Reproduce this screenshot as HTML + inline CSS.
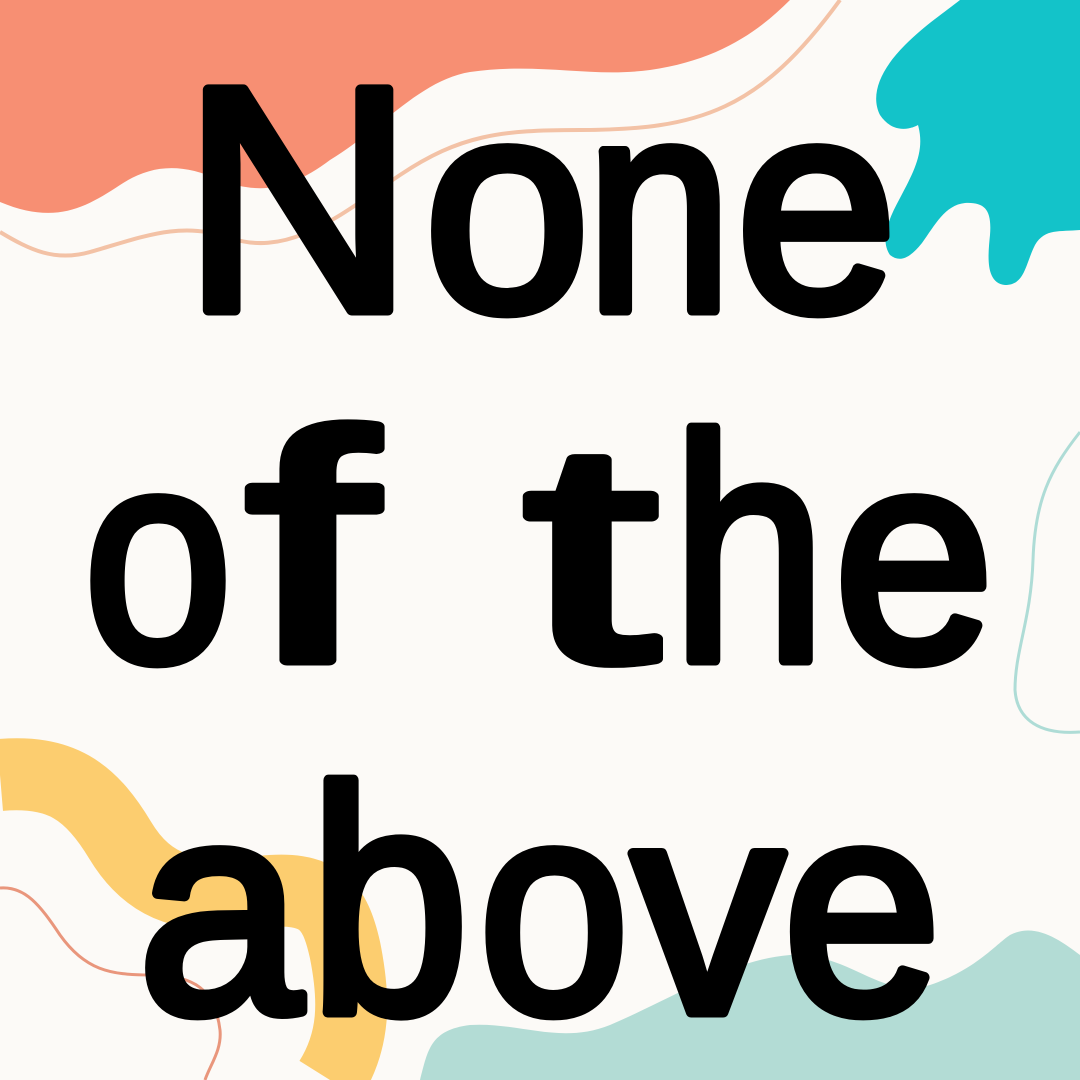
<!DOCTYPE html>
<html><head><meta charset="utf-8"><style>
html,body{margin:0;padding:0;background:#fcfaf7;}
svg{display:block}
</style></head><body>
<svg width="1080" height="1080" viewBox="0 0 1080 1080" xmlns="http://www.w3.org/2000/svg">
<rect width="1080" height="1080" fill="#fcfaf7"/>
<path d="M0 0 L790 0 C760 30 720 60 650 70 C590 78 540 62 470 72 C420 80 380 130 330 160 C290 190 260 195 220 180 C180 162 150 165 120 185 C85 208 55 225 0 202 Z" fill="#f78f73"/>
<path d="M0 232 C30 250 55 262 90 252 C140 238 180 220 230 238 C290 258 340 215 400 175 C460 135 500 130 580 130 C700 130 760 110 840 0" fill="none" stroke="#f3c2a6" stroke-width="4"/>
<path d="M960 0 L1080 0 L1080 230 C1060 232 1045 228 1035 245 C1025 265 1025 285 1005 285 C985 283 988 255 990 235 C992 210 985 202 965 203 C945 205 935 225 922 243 C910 258 900 263 890 255 C880 240 888 220 900 198 C915 170 925 150 918 125 C905 132 890 130 880 115 C870 95 880 70 905 45 C925 25 945 12 960 0 Z" fill="#13c3c9"/>
<path d="M1080 432 C1050 470 1035 500 1033 560 C1031 620 1015 650 1015 690 C1017 720 1040 735 1080 732" fill="none" stroke="#aedcd6" stroke-width="3"/>
<path d="M0 775 C60 770 90 790 120 840 C150 890 190 900 260 892 C320 885 335 905 345 950 C355 1000 355 1040 330 1080" fill="none" stroke="#fccd6f" stroke-width="72"/>
<path d="M0 888 C25 886 40 905 60 935 C85 970 110 975 150 975 C195 975 215 990 220 1030 C222 1050 210 1065 205 1080" fill="none" stroke="#e9967c" stroke-width="3"/>
<path d="M420 1080 C428 1050 430 1030 470 1025 C520 1022 560 1045 610 1025 C680 995 730 960 790 955 C850 952 880 1000 930 985 C975 970 995 945 1010 935 C1035 922 1060 940 1080 955 L1080 1080 Z" fill="#b3dcd5"/>
<g font-family="'Liberation Sans',sans-serif" font-size="300" fill="#000" stroke="#000" stroke-width="11" stroke-linejoin="round">
<text x="182" y="310" font-size="320" textLength="232" lengthAdjust="spacingAndGlyphs">N</text>
<text x="424" y="310" textLength="166" lengthAdjust="spacingAndGlyphs">o</text>
<text x="586" y="310" textLength="146" lengthAdjust="spacingAndGlyphs">n</text>
<text x="736" y="310" textLength="161" lengthAdjust="spacingAndGlyphs">e</text>
<text x="84" y="660" textLength="148" lengthAdjust="spacingAndGlyphs">o</text>
<text x="246" y="660" font-size="325" textLength="130" lengthAdjust="spacingAndGlyphs">f</text>
<text x="524" y="660" font-size="310" textLength="134" lengthAdjust="spacingAndGlyphs">t</text>
<text x="672" y="660" font-size="320" textLength="154" lengthAdjust="spacingAndGlyphs">h</text>
<text x="834" y="660" textLength="160" lengthAdjust="spacingAndGlyphs">e</text>
<text x="138" y="1012" textLength="164" lengthAdjust="spacingAndGlyphs">a</text>
<text x="309" y="1012" font-size="320" textLength="160" lengthAdjust="spacingAndGlyphs">b</text>
<text x="479" y="1012" textLength="150" lengthAdjust="spacingAndGlyphs">o</text>
<text x="632" y="1012" textLength="152" lengthAdjust="spacingAndGlyphs">v</text>
<text x="783" y="1012" textLength="158" lengthAdjust="spacingAndGlyphs">e</text>
</g>
</svg>
</body></html>
